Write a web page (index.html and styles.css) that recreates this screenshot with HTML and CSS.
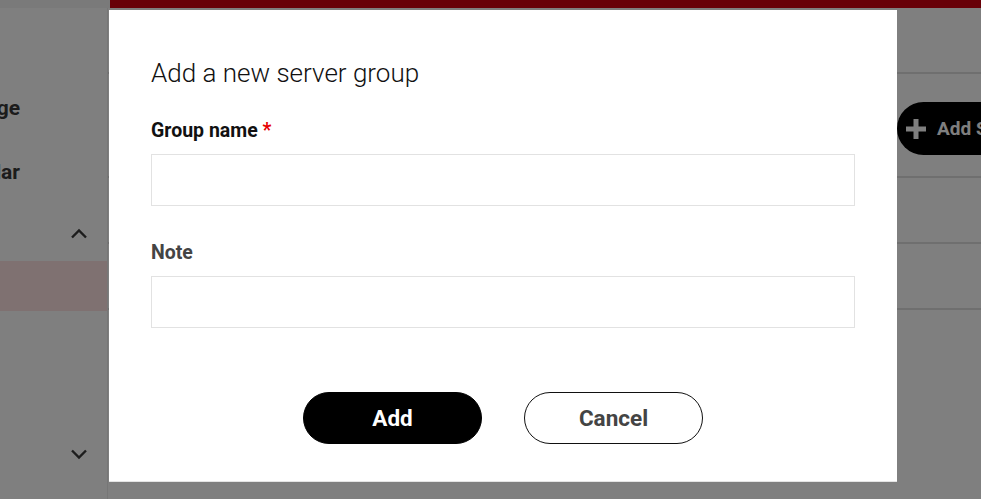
FILE: index.html
```html
<!DOCTYPE html>
<html lang="en">
<head>
    <meta charset="UTF-8">
    <meta name="viewport" content="width=device-width, initial-scale=1.0">
    <title>Server groups</title>
    <link rel="stylesheet" href="styles.css">
</head>
<body>
    <div class="page">
        <div class="topbar">
            <div class="topbar-left"></div>
            <div class="topbar-right"></div>
        </div>

        <div class="main">
            <nav class="sidebar">
                <div class="nav-item"><span class="nav-label">Manage</span></div>
                <div class="nav-item"><span class="nav-label">Calendar</span></div>
                <div class="nav-toggle">
                    <svg width="18" height="11" viewBox="0 0 18 11"><path d="M2 9.5 L9 2.5 L16 9.5" fill="none" stroke="#3a3a3a" stroke-width="2.4"/></svg>
                </div>
                <div class="nav-active"></div>
                <div class="nav-spacer"></div>
                <div class="nav-toggle">
                    <svg width="18" height="11" viewBox="0 0 18 11"><path d="M2 1.5 L9 8.5 L16 1.5" fill="none" stroke="#3a3a3a" stroke-width="2.4"/></svg>
                </div>
            </nav>

            <section class="content">
                <div class="row"></div>
                <div class="row row-tools">
                    <button class="btn-add-server">
                        <svg width="20" height="20" viewBox="0 0 20 20"><path d="M10 0 V20 M0 10 H20" stroke="#fff" stroke-width="5"/></svg>
                        Add Server
                    </button>
                </div>
                <div class="row"></div>
                <div class="row"></div>
            </section>
        </div>
    </div>

    <div class="backdrop">
        <div class="modal">
            <h2 class="modal-title">Add a new server group</h2>

            <div class="field">
                <label class="field-label" for="groupName">Group name <span class="required">*</span></label>
                <input type="text" id="groupName" class="field-input">
            </div>

            <div class="field field-note">
                <label class="field-label muted" for="groupNote">Note</label>
                <input type="text" id="groupNote" class="field-input">
            </div>

            <div class="modal-actions">
                <button class="btn btn-primary">Add</button>
                <button class="btn btn-outline">Cancel</button>
            </div>
        </div>
    </div>
</body>
</html>
```

FILE: styles.css
```css
body {
    margin: 0;
    font-family: Roboto, "Liberation Sans", Arial, sans-serif;
    background: #fff;
    color: #222;
    overflow: hidden;
}
.page {
    height: 499px;
}
.topbar {
    display: flex;
    height: 8px;
}
.topbar-left {
    width: 110px;
    background: #f5f5f5;
}
.topbar-right {
    flex: 1;
    background: #d10010;
}
.main {
    display: flex;
}
.sidebar {
    flex-shrink: 0;
    width: 108px;
    height: 491px;
    border-right: 1px solid #ececec;
    padding-top: 88px;
    box-sizing: border-box;
}
.nav-item {
    display: flex;
    justify-content: flex-end;
    width: 20px;
    height: 64px;
    font-size: 21px;
    font-weight: 700;
    color: #383838;
    white-space: nowrap;
}
.nav-toggle {
    display: flex;
    justify-content: flex-end;
    padding-right: 19px;
    height: 11px;
    margin-top: 4px;
}
.nav-active {
    height: 50px;
    margin-top: 22px;
    background: #fee2e2;
}
.nav-spacer {
    height: 134px;
}
.content {
    flex: 1;
    min-width: 0;
}
.row {
    height: 64px;
    border-bottom: 2px solid #dedede;
}
.row-tools {
    height: 102px;
    display: flex;
    align-items: flex-start;
    padding-left: 789px;
    box-sizing: content-box;
}
.btn-add-server {
    flex-shrink: 0;
    display: flex;
    align-items: center;
    gap: 11px;
    height: 53px;
    padding: 0 24px 0 9px;
    margin-top: 28px;
    background: #000;
    color: #fff;
    border: none;
    border-radius: 27px;
    font-family: inherit;
    font-size: 19px;
    font-weight: 700;
    white-space: nowrap;
}
.backdrop {
    position: fixed;
    inset: 0;
    background: rgba(0, 0, 0, 0.5);
}
.modal {
    position: absolute;
    top: 10px;
    left: 109px;
    width: 788px;
    height: 472px;
    box-sizing: border-box;
    padding: 48px 42px 0;
    background: #fff;
    border-bottom: 1px solid #e4e4e4;
}
.modal-title {
    margin: 0 0 32px;
    font-size: 26px;
    line-height: 30px;
    font-weight: 300;
    color: #111;
}
.field-label {
    display: block;
    margin-bottom: 13px;
    font-size: 19.5px;
    line-height: 21px;
    font-weight: 700;
    color: #111;
}
.field-label.muted {
    color: #444;
}
.required {
    color: #e60000;
}
.field-input {
    display: block;
    width: 100%;
    height: 52px;
    box-sizing: border-box;
    border: 1px solid #e2e2e2;
    background: #fff;
    font-family: inherit;
    font-size: 16px;
    padding: 0 14px;
}
.field-note {
    margin-top: 36px;
}
.modal-actions {
    display: flex;
    justify-content: center;
    gap: 42px;
    margin-top: 64px;
}
.btn {
    width: 179px;
    height: 52px;
    border-radius: 26px;
    font-family: inherit;
    font-size: 22.5px;
    font-weight: 700;
    cursor: pointer;
}
.btn-primary {
    background: #000;
    color: #fff;
    border: 1px solid #000;
}
.btn-outline {
    background: #fff;
    color: #444;
    border: 1px solid #111;
}
```
